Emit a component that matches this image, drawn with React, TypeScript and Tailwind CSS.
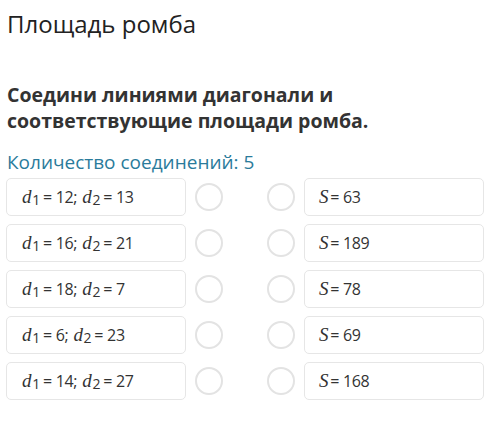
const rows = [
  { a: '12', b: '13', s: '63' },
  { a: '16', b: '21', s: '189' },
  { a: '18', b: '7', s: '78' },
  { a: '6', b: '23', s: '69' },
  { a: '14', b: '27', s: '168' },
]

function D({ n }: { n: string }) {
  return (
    <span>
      <i className="font-['Liberation_Serif',serif] text-[19px]">d</i>
      <sub className="text-[14px] relative top-[2px] ml-[1px]">{n}</sub>
    </span>
  )
}

function Circle() {
  return <div className="w-[28px] h-[28px] rounded-full border-2 border-[#e3e3e3] bg-white shrink-0" />
}

export default function App() {
  return (
    <div className="w-[500px] h-[440px] bg-white font-['Open_Sans',sans-serif] pl-[7px] pt-[9px]">
      <h1 className="text-[24px] leading-[30px] text-[#222]">Площадь ромба</h1>
      <p className="mt-[43px] text-[19.5px] leading-[26px] font-bold text-[#333] w-[390px]">
        Соедини линиями диагонали и соответствующие площади ромба.
      </p>
      <p className="mt-[16px] text-[19px] leading-[24px] text-[#2a7b9b]">Количество соединений: 5</p>
      <div className="mt-[4px] flex flex-col gap-[8px]">
        {rows.map((r, i) => (
          <div key={i} className="flex items-center h-[38px]">
            <div className="w-[180px] h-[38px] ml-[-1px] border border-[#e6e6e6] rounded-[5px] flex items-center pl-[15px] text-[16px] text-[#333] tracking-[-0.3px]">
              <D n="1" />
              <span className="ml-[3px]">= {r.a};</span>
              <span className="ml-[5px]"><D n="2" /></span>
              <span className="ml-[3px]">= {r.b}</span>
            </div>
            <div className="ml-[9px]"><Circle /></div>
            <div className="ml-[44px]"><Circle /></div>
            <div className="ml-[9px] w-[180px] h-[38px] border border-[#e6e6e6] rounded-[5px] flex items-center pl-[14px] text-[16px] text-[#333] tracking-[-0.3px]">
              <i className="font-['Liberation_Serif',serif] text-[19px]">S</i>
              <span className="ml-[2px]">= {r.s}</span>
            </div>
          </div>
        ))}
      </div>
    </div>
  )
}
